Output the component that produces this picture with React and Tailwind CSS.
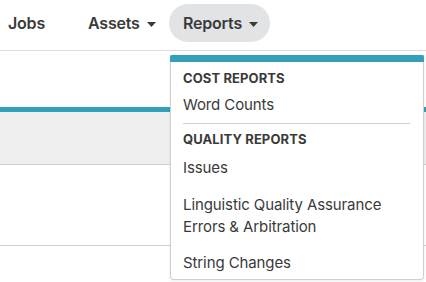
import React from "react";

function Caret() {
  return (
    <svg width="9" height="5" viewBox="0 0 9 5" className="ml-[7px] mt-[2px]">
      <path d="M0 0 L9 0 L4.5 5 Z" fill="#3a3a3a" />
    </svg>
  );
}

export default function App() {
  return (
    <div
      className="relative w-[426px] h-[282px] overflow-hidden bg-white text-[#3a3a3a]"
      style={{ fontFamily: "Inter, 'Noto Sans', sans-serif" }}
    >
      <nav className="h-[51px] border-b border-[#dcdcdc] flex items-start pt-[4px]">
        <div className="h-[38px] flex items-center pl-[8px] w-[88px] text-[16px] font-semibold tracking-[-0.2px]">
          Jobs
        </div>
        <div className="h-[38px] flex items-center w-[81px] text-[16px] font-semibold tracking-[-0.2px]">
          Assets
          <Caret />
        </div>
        <div className="h-[38px] flex items-center pl-[14px] pr-[12px] rounded-full bg-[#e2e3e5] text-[16px] font-semibold tracking-[-0.2px]">
          Reports
          <Caret />
        </div>
      </nav>

      <div className="pt-[56px]">
        <div className="h-[5px] bg-[#339fb9]" />
        <div className="h-[53px] bg-[#efefef] border-b border-[#cfcfcf]" />
        <div className="h-[81px] border-b border-[#cfcfcf]" />
      </div>

      <div className="absolute left-[170px] top-[55px] w-[254px] h-[225px] bg-white border border-[#cfcfcf] border-t-0 rounded-b-[4px] shadow-[0_1px_3px_rgba(0,0,0,0.08)]">
        <div className="h-[7px] bg-[#339fb9] -mx-px rounded-t-[2px]" />
        <div className="px-[12px] pt-[8px]">
          <div className="text-[13px] font-bold tracking-[0.1px] leading-[16px] h-[16px]">COST REPORTS</div>
          <div className="text-[15px] leading-[20px] mt-[9px] tracking-[-0.1px]">Word Counts</div>
          <div className="h-px bg-[#cfcfcf] mt-[8px] mr-[1px]" />
          <div className="text-[13px] font-bold tracking-[0.1px] leading-[16px] mt-[7px]">QUALITY REPORTS</div>
          <div className="text-[15px] leading-[20px] mt-[11px] tracking-[-0.1px]">Issues</div>
          <div className="text-[15px] leading-[22px] mt-[16px] tracking-[-0.1px]">
            Linguistic Quality Assurance
            <br />
            Errors &amp; Arbitration
          </div>
          <div className="text-[15px] leading-[20px] mt-[15px] tracking-[-0.1px]">String Changes</div>
        </div>
      </div>
    </div>
  );
}
